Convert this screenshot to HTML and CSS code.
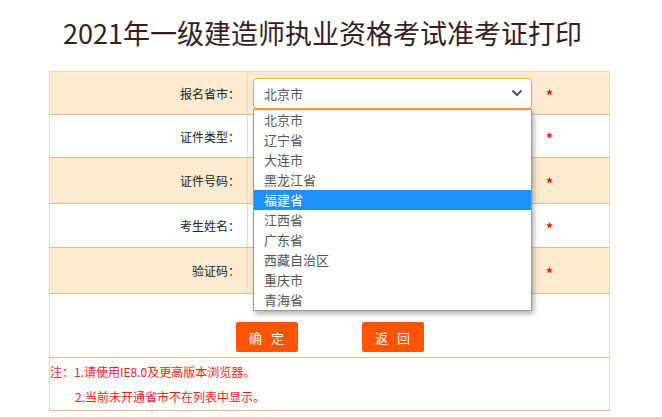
FILE: index.html
```html
<!DOCTYPE html>
<html lang="zh-CN">
<head>
  <meta charset="UTF-8" />
  <title>2021年一级建造师执业资格考试准考证打印</title>
  <link rel="stylesheet" href="styles.css">
</head>
<body>

  <h1 class="title">2021年一级建造师执业资格考试准考证打印</h1>

  <table class="form-table">
    <tr class="row tan h43">
      <td class="label">报名省市：</td>
      <td class="field">
        <div class="select-wrap">
          <div class="select">
            <span>北京市</span>
            <svg class="chevron" width="12" height="8" viewBox="0 0 12 8"><path d="M1.5 1.5 L6 6 L10.5 1.5" fill="none" stroke="#555" stroke-width="2"/></svg>
          </div>
          <ul class="dropdown">
            <li>北京市</li>
            <li>辽宁省</li>
            <li>大连市</li>
            <li>黑龙江省</li>
            <li class="active">福建省</li>
            <li>江西省</li>
            <li>广东省</li>
            <li>西藏自治区</li>
            <li>重庆市</li>
            <li>青海省</li>
          </ul>
        </div>
      </td>
      <td class="star"><span>*</span></td>
    </tr>
    <tr class="row h43">
      <td class="label">证件类型：</td>
      <td class="field"></td>
      <td class="star"><span>*</span></td>
    </tr>
    <tr class="row tan h46">
      <td class="label">证件号码：</td>
      <td class="field"></td>
      <td class="star"><span>*</span></td>
    </tr>
    <tr class="row h44">
      <td class="label">考生姓名：</td>
      <td class="field"></td>
      <td class="star"><span>*</span></td>
    </tr>
    <tr class="row tan h46">
      <td class="label">验证码：</td>
      <td class="field"></td>
      <td class="star"><span>*</span></td>
    </tr>
    <tr class="row btn-row">
      <td colspan="3">
        <div class="buttons">
          <button type="button" class="btn">确 定</button>
          <button type="button" class="btn">返 回</button>
        </div>
      </td>
    </tr>
    <tr class="row notes-row">
      <td colspan="3">
        <p class="note">注：1.请使用IE8.0及更高版本浏览器。</p>
        <p class="note indent">2.当前未开通省市不在列表中显示。</p>
      </td>
    </tr>
  </table>

</body>
</html>
```

FILE: styles.css
```css
body {
  margin: 0;
  background: #fff;
  font-family: "Noto Sans CJK SC", "Noto Sans", sans-serif;
  color: #333;
}

.title {
  margin: 0 0 0 -17px;
  padding-top: 15px;
  height: 36px;
  line-height: 36px;
  font-size: 27px;
  font-weight: normal;
  color: #3b1c1c;
  text-align: center;
}

.form-table {
  margin: 20px 0 0 49px;
  width: 561px;
  border-collapse: collapse;
  border: 1px solid #f8d2b6;
}

.row td {
  border-bottom: 1px solid #f2b98f;
  padding: 0;
}

.tan td {
  background: #fdebd1;
}

.h43 { height: 43px; }
.h44 { height: 44px; }
.h46 { height: 46px; }

.label {
  width: 190px;
  padding-right: 7px !important;
  text-align: right;
  font-size: 12px;
  color: #222;
  border-right: 1px solid #f7d6bd;
}

.field {
  width: 285px;
  padding-left: 5px !important;
}

.star {
  padding-left: 8px !important;
  color: #ff1010;
  font-size: 14px;
  font-weight: bold;
}

.star span {
  position: relative;
  top: 2px;
}

.select-wrap {
  position: relative;
  width: 279px;
}

.select {
  box-sizing: border-box;
  height: 31px;
  border: 1px solid #f3a93c;
  border-radius: 4px;
  background: #fff;
  display: flex;
  align-items: center;
  justify-content: space-between;
  padding: 0 8px 0 10px;
  font-size: 13px;
  color: #555;
  box-shadow: 0 1px 2px rgba(0,0,0,0.12);
}

.dropdown {
  position: absolute;
  top: 31px;
  left: 0;
  z-index: 5;
  box-sizing: border-box;
  width: 279px;
  margin: 0;
  padding: 0;
  list-style: none;
  background: #fff;
  border: 1px solid #9a9a9a;
  box-shadow: 2px 3px 5px rgba(0,0,0,0.3);
}

.dropdown li {
  height: 20px;
  line-height: 20px;
  padding-left: 10px;
  font-size: 13px;
  color: #555;
}

.dropdown li.active {
  background: #1e90ff;
  color: #fff;
}

.btn-row td {
  height: 63px;
  vertical-align: top;
}

.buttons {
  display: flex;
  justify-content: center;
  gap: 64px;
  padding-top: 28px;
}

.btn {
  width: 62px;
  height: 30px;
  border: none;
  border-radius: 2px;
  background: #ff5500;
  color: #fff;
  font-family: "Noto Sans CJK SC", sans-serif;
  font-size: 13px;
  letter-spacing: 3px;
  padding: 0 0 0 3px;
  cursor: pointer;
}

.notes-row td {
  height: 51px;
  vertical-align: top;
  padding-top: 1px;
}

.note {
  margin: 0;
  height: 25px;
  line-height: 25px;
  font-size: 12px;
  color: #ff1a1a;
}

.note.indent {
  padding-left: 25px;
}
```
